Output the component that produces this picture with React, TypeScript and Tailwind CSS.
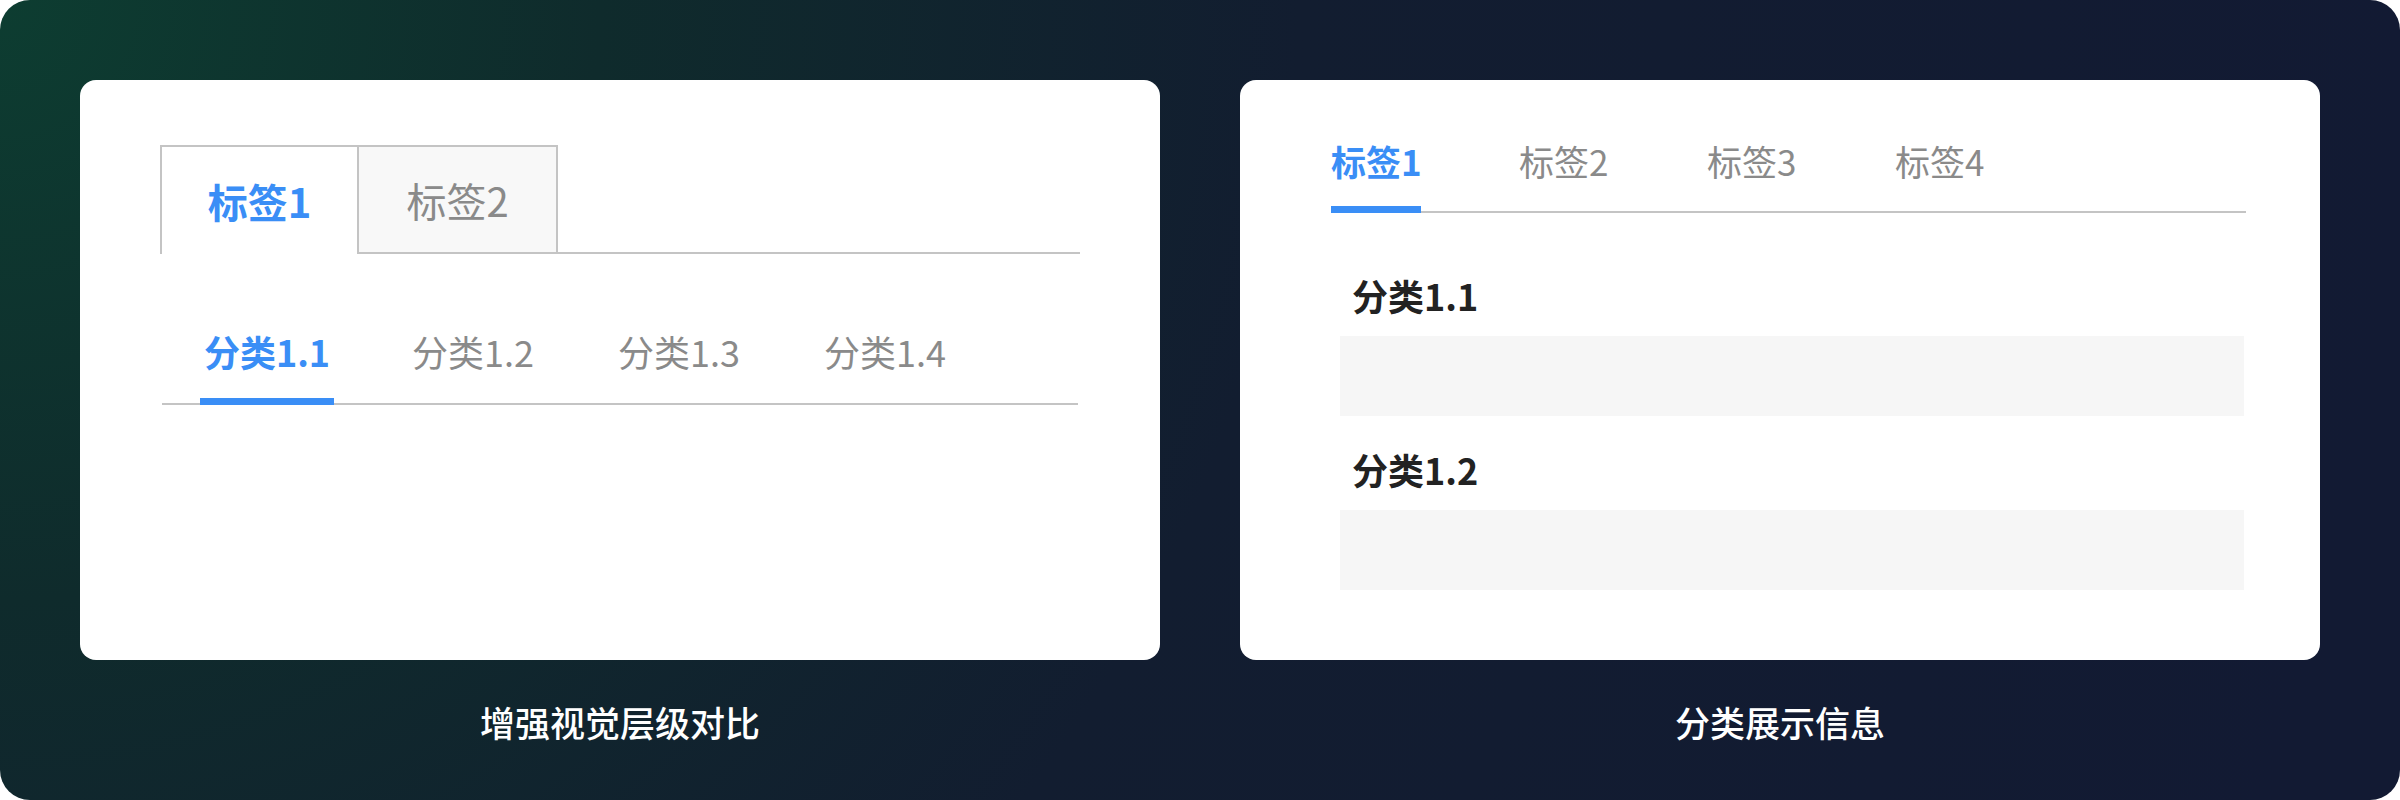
import React from "react";

const cjk = { fontFamily: '"Noto Sans CJK SC", "Noto Sans", sans-serif' };

const subTabs = ["分类1.1", "分类1.2", "分类1.3", "分类1.4"];
const topTabs = ["标签1", "标签2", "标签3", "标签4"];
const sections = ["分类1.1", "分类1.2"];

function LevelCard() {
  return (
    <div className="h-[580px] w-[1080px] rounded-[16px] bg-white px-[80px] pt-[65px]">
      {/* card-style primary tabs */}
      <div className="flex h-[109px]">
        <div className="flex w-[199px] items-center justify-center border-2 border-b-0 border-[#c4c4c4] bg-white text-[40px] font-bold text-[#3a8ef6]">
          标签1
        </div>
        <div className="flex w-[199px] items-center justify-center border-2 border-l-0 border-[#c4c4c4] bg-[#f8f8f8] text-[40px] text-[#8a8a8a]">
          标签2
        </div>
        <div className="flex-1 border-b-2 border-[#c4c4c4]" />
      </div>
      {/* underline secondary tabs */}
      <div className="mx-[2px] mt-[73px] flex gap-[72px] border-b-2 border-[#c4c4c4] pl-[38px]">
        {subTabs.map((t, i) => (
          <div
            key={t}
            className={
              i === 0
                ? "-mb-[2px] w-[134px] whitespace-nowrap border-b-[7px] border-[#3a8ef6] pb-[23px] text-center text-[36px] leading-[48px] font-bold text-[#3a8ef6]"
                : "-mb-[2px] w-[134px] whitespace-nowrap border-b-[7px] border-transparent pb-[23px] text-center text-[36px] leading-[48px] text-[#8a8a8a]"
            }
          >
            {t}
          </div>
        ))}
      </div>
    </div>
  );
}

function InfoCard() {
  return (
    <div className="h-[580px] w-[1080px] rounded-[16px] bg-white pt-[57px] pl-[91px] pr-[74px]">
      <div className="flex gap-[98px] border-b-2 border-[#c4c4c4]">
        {topTabs.map((t, i) => (
          <div
            key={t}
            className={
              i === 0
                ? "-mb-[2px] w-[90px] whitespace-nowrap border-b-[7px] border-[#3a8ef6] pb-[21px] text-[35px] leading-[48px] font-bold text-[#3a8ef6]"
                : "-mb-[2px] w-[90px] whitespace-nowrap border-b-[7px] border-transparent pb-[21px] text-[35px] leading-[48px] text-[#8a8a8a]"
            }
          >
            {t}
          </div>
        ))}
      </div>
      <div className="ml-[9px] mr-[2px] pt-[58px]">
        {sections.map((s, i) => (
          <div key={s} className={i === 0 ? "" : "mt-[29px]"}>
            <div className="pl-[12px] text-[36px] leading-[48px] font-bold text-[#222222]">{s}</div>
            <div className="mt-[17px] h-[80px] bg-[#f6f6f6]" />
          </div>
        ))}
      </div>
    </div>
  );
}

export default function App() {
  return (
    <div className="bg-white" style={cjk}>
      <div className="flex h-[800px] w-[2400px] gap-[80px] rounded-[30px] bg-[radial-gradient(circle_at_0%_0%,#0d3d31_0px,#0f2b2c_600px,#121d30_1300px,#121a33_2400px)] px-[80px] pt-[80px]">
        <div className="flex flex-col items-center">
          <LevelCard />
          <div className="mt-[38px] text-[35px] leading-[48px] font-medium text-white">增强视觉层级对比</div>
        </div>
        <div className="flex flex-col items-center">
          <InfoCard />
          <div className="mt-[38px] text-[35px] leading-[48px] font-medium text-white">分类展示信息</div>
        </div>
      </div>
    </div>
  );
}
